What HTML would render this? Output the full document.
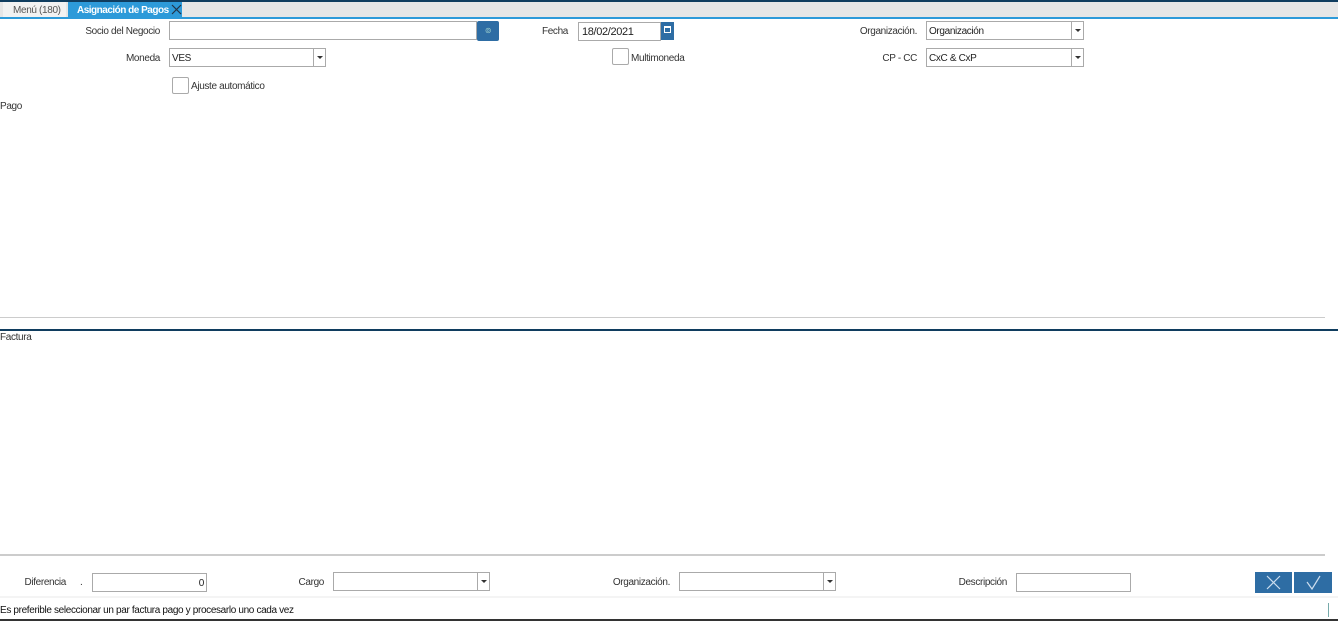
<!DOCTYPE html>
<html><head><meta charset="utf-8"><style>
*{box-sizing:border-box;margin:0;padding:0}
body{width:1338px;height:621px;position:relative;overflow:hidden;background:#fff;font-family:"Liberation Sans",sans-serif;font-size:10px;letter-spacing:-0.35px;color:#333}
.a{position:absolute}
.lbl{position:absolute;text-align:right;font-size:10px;color:#333}
.inp{position:absolute;border:1px solid #aaa;background:#fff;height:19px;font-size:10px;padding:4px 2px 0;color:#222}
.dd{position:absolute;right:0;top:0;width:12px;height:17px;border-left:1px solid #aaa;background:#fff}
.dd:after{content:"";position:absolute;left:3px;top:7px;border:3px solid transparent;border-top:3px solid #333}
.cb{position:absolute;width:17px;height:17px;border:1px solid #aaa;border-radius:2px;background:#fff}
</style></head><body>
<div class="a" style="left:0;top:0;width:1338px;height:2px;background:#103d5f"></div>
<div class="a" style="left:0;top:2px;width:1338px;height:15px;background:#e6e6e6"></div>
<div class="a" style="left:0;top:17px;width:1338px;height:2px;background:#2d9ad9"></div>
<div class="a" style="left:3px;top:2px;width:63px;height:15px;background:#f2f2f2;font-size:10px;color:#555;padding:3px 0 0 10px">Menú (180)</div>
<div class="a" style="left:68px;top:2px;width:114px;height:16px;background:#2d9ad9;color:#fff;font-size:10px;font-weight:bold;padding:3px 0 0 9px;letter-spacing:-0.5px">Asignación de Pagos</div>
<svg class="a" style="left:171px;top:4px" width="11" height="11"><path d="M1 1L10 10M10 1L1 10" stroke="#234" stroke-width="1.2"/></svg>

<div class="lbl" style="left:40px;top:26px;width:120px">Socio del Negocio</div>
<div class="inp" style="left:169px;top:21px;width:308px"></div>
<div class="a" style="left:477px;top:21px;width:22px;height:20px;background:#2e6da4;border-radius:2px;color:#9cc;font-size:8px;text-align:center;line-height:20px">⊚</div>
<div class="lbl" style="left:500px;top:26px;width:68px">Fecha</div>
<div class="inp" style="left:578px;top:22px;width:83px;font-size:11px;padding:3px 3px 0">18/02/2021</div>
<div class="a" style="left:661px;top:22px;width:13px;height:18px;background:#2e6da4"><div class="a" style="left:3px;top:4px;width:7px;height:7px;border:1px solid #fff;border-top-width:2px"></div></div>
<div class="lbl" style="left:800px;top:26px;width:117px">Organización.</div>
<div class="inp" style="left:926px;top:21px;width:158px">Organización<div class="dd"></div></div>

<div class="lbl" style="left:60px;top:53px;width:100px">Moneda</div>
<div class="inp" style="left:169px;top:48px;width:157px">VES<div class="dd"></div></div>
<div class="cb" style="left:612px;top:48px"></div>
<div class="a" style="left:631px;top:53px">Multimoneda</div>
<div class="lbl" style="left:800px;top:53px;width:117px">CP - CC</div>
<div class="inp" style="left:926px;top:48px;width:158px">CxC &amp; CxP<div class="dd"></div></div>

<div class="cb" style="left:172px;top:77px"></div>
<div class="a" style="left:191px;top:81px">Ajuste automático</div>
<div class="a" style="left:0;top:101px">Pago</div>

<div class="a" style="left:0;top:317px;width:1325px;height:1px;background:#ccc"></div>
<div class="a" style="left:0;top:329px;width:1338px;height:2px;background:#103d5f"></div>
<div class="a" style="left:0;top:332px">Factura</div>

<div class="a" style="left:0;top:554px;width:1325px;height:2px;background:#ccc"></div>
<div class="a" style="left:0;top:596px;width:1338px;height:2px;background:#f4f4f4"></div>

<div class="lbl" style="left:10px;top:577px;width:56px">Diferencia</div>
<div class="a" style="left:80px;top:577px">.</div>
<div class="inp" style="left:92px;top:573px;width:115px;text-align:right">0</div>
<div class="lbl" style="left:270px;top:577px;width:54px">Cargo</div>
<div class="inp" style="left:333px;top:572px;width:157px"><div class="dd"></div></div>
<div class="lbl" style="left:580px;top:577px;width:90px">Organización.</div>
<div class="inp" style="left:679px;top:572px;width:157px"><div class="dd"></div></div>
<div class="lbl" style="left:930px;top:577px;width:77px">Descripción</div>
<div class="inp" style="left:1016px;top:573px;width:115px"></div>
<div class="a" style="left:1255px;top:572px;width:37px;height:21px;background:#2e6da4"><svg width="37" height="21"><path d="M12 4L25 17M25 4L12 17" stroke="#cde" stroke-width="1.2"/></svg></div>
<div class="a" style="left:1294px;top:572px;width:38px;height:21px;background:#2e6da4"><svg width="38" height="21"><path d="M13 10L18 17L26 4" stroke="#cde" stroke-width="1.2" fill="none"/></svg></div>

<div class="a" style="left:0;top:605px;font-size:10px;color:#111">Es preferible seleccionar un par factura pago y procesarlo uno cada vez</div>
<div class="a" style="left:1328px;top:603px;width:1px;height:14px;background:#7aa"></div>
<div class="a" style="left:0;top:619px;width:1338px;height:2px;background:#333"></div>
</body></html>
